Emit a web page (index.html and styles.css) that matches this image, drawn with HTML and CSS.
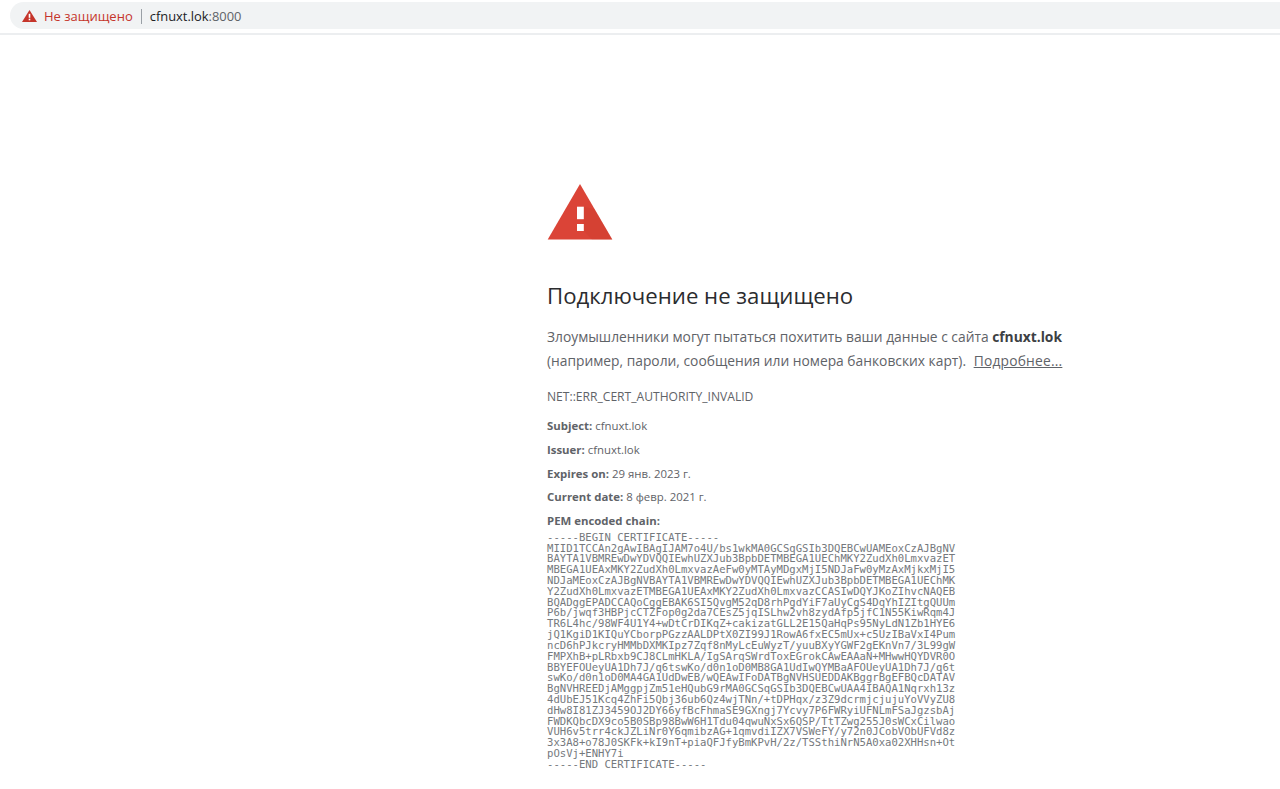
FILE: index.html
```html
<!DOCTYPE html>
<html lang="ru">
<head>
<meta charset="utf-8">
<title>Подключение не защищено</title>
<link rel="stylesheet" href="styles.css">
</head>
<body>
<header class="toolbar">
  <div class="omnibox">
    <svg class="chip-icon" viewBox="0 0 15 12" width="15" height="12" aria-hidden="true"><path fill="#c5352b" d="M7.5 0 15 12H0Z"/><rect x="6.7" y="3.8" width="1.6" height="4" fill="#fff"/><rect x="6.7" y="8.7" width="1.6" height="1.6" fill="#fff"/></svg>
    <span class="chip-text">Не защищено</span>
    <span class="divider"></span>
    <span class="url"><span class="host">cfnuxt.lok</span>:8000</span>
  </div>
</header>
<main class="interstitial">
  <svg class="warning" viewBox="0 0 66 58" width="66" height="58" aria-hidden="true">
    <path fill="#db4437" d="M33 0 65.3 55.5H0.7Z"/>
    <path fill="#c53929" opacity=".25" d="M36.8 23V47L45 55.5H65.3L47.5 25Z"/>
    <rect x="30" y="22.7" width="6.8" height="12.5" fill="#fff"/>
    <rect x="30" y="40" width="6.8" height="7" fill="#fff"/>
  </svg>
  <h1 class="title">Подключение не защищено</h1>
  <p class="lead">Злоумышленники могут пытаться похитить ваши данные с сайта <b class="site">cfnuxt.lok</b> (например, пароли, сообщения или номера банковских карт). <a class="more" href="#">Подробнее...</a></p>
  <div class="code">NET::ERR_CERT_AUTHORITY_INVALID</div>
  <ul class="details">
    <li><b>Subject:</b> cfnuxt.lok</li>
    <li><b>Issuer:</b> cfnuxt.lok</li>
    <li><b>Expires on:</b> 29 янв. 2023 г.</li>
    <li><b>Current date:</b> 8 февр. 2021 г.</li>
    <li><b>PEM encoded chain:</b></li>
  </ul>
  <pre class="pem">-----BEGIN CERTIFICATE-----
MIID1TCCAn2gAwIBAgIJAM7o4U/bs1wkMA0GCSqGSIb3DQEBCwUAMEoxCzAJBgNV
BAYTA1VBMREwDwYDVQQIEwhUZXJub3BpbDETMBEGA1UEChMKY2ZudXh0LmxvazET
MBEGA1UEAxMKY2ZudXh0LmxvazAeFw0yMTAyMDgxMjI5NDJaFw0yMzAxMjkxMjI5
NDJaMEoxCzAJBgNVBAYTA1VBMREwDwYDVQQIEwhUZXJub3BpbDETMBEGA1UEChMK
Y2ZudXh0LmxvazETMBEGA1UEAxMKY2ZudXh0LmxvazCCASIwDQYJKoZIhvcNAQEB
BQADggEPADCCAQoCggEBAK6SI5QvgM52qD8rhPgdYiF7aUyCgS4DqYhIZItgQUUm
P6b/jwqf3HBPjcCTZFop0g2da7CEsZ5jqISLhw2vh8zydAfp5jfC1N55KiwRqm4J
TR6L4hc/98WF4U1Y4+wDtCrDIKqZ+cakizatGLL2E15QaHqPs95NyLdN1Zb1HYE6
jQ1KgiD1KIQuYCborpPGzzAALDPtX0ZI99J1RowA6fxEC5mUx+c5UzIBaVxI4Pum
ncD6hPJkcryHMMbDXMKIpz7Zqf8nMyLcEuWyzT/yuuBXyYGWF2gEKnVn7/3L99gW
FMPXhB+pLRbxb9CJ8CLmHKLA/IgSArqSWrdToxEGrokCAwEAAaN+MHwwHQYDVR0O
BBYEFOUeyUA1Dh7J/q6tswKo/d0n1oD0MB8GA1UdIwQYMBaAFOUeyUA1Dh7J/q6t
swKo/d0n1oD0MA4GA1UdDwEB/wQEAwIFoDATBgNVHSUEDDAKBggrBgEFBQcDATAV
BgNVHREEDjAMggpjZm51eHQubG9rMA0GCSqGSIb3DQEBCwUAA4IBAQA1Nqrxh13z
4dUbEJ51Kcq4ZhFi5Qbj36ub6Qz4wjTNn/+tDPHqx/z3Z9dcrmjcjujuYoVVyZU8
dHw8I81ZJ3459OJ2DY66yfBcFhmaSE9GXngj7Ycvy7P6FWRyiUFNLmFSaJgzsbAj
FWDKQbcDX9co5B0SBp98BwW6H1Tdu04qwuNxSx6QSP/TtTZwg255J0sWCxCilwao
VUH6v5trr4ckJZLiNr0Y6qmibzAG+1qmvdiIZX7VSWeFY/y72n0JCobVObUFVd8z
3x3A8+o78J0SKFk+kI9nT+piaQFJfyBmKPvH/2z/TSSthiNrN5A0xa02XHHsn+Ot
pOsVj+ENHY7i
-----END CERTIFICATE-----</pre>
</main>
</body>
</html>
```

FILE: styles.css
```css
html, body {
  margin: 0;
  height: 100%;
  overflow: hidden;
  background: #fff;
}

body {
  font-family: "Open Sans", "Noto Sans", sans-serif;
  color: #5f6368;
}

.toolbar {
  height: 35px;
  padding: 2px 0 0 10px;
  box-sizing: border-box;
  border-bottom: 2px solid #eceef0;
}

.omnibox {
  height: 27px;
  display: flex;
  align-items: center;
  background: #f1f3f4;
  border-radius: 14px 0 0 14px;
  padding: 1px 0 0 12px;
  box-sizing: border-box;
  font-size: 13px;
}

.chip-icon {
  flex: none;
  margin-right: 7px;
}

.chip-text {
  color: #c5352b;
}

.divider {
  width: 1px;
  height: 15px;
  background: #9aa0a6;
  margin: 0 8px;
}

.url {
  color: #5f6368;
  font-size: 12.9px;
}

.host {
  color: #202124;
}

.interstitial {
  width: 525px;
  margin-left: 547px;
  padding-top: 149px;
}

.warning {
  display: block;
  margin-bottom: 39px;
}

.title {
  margin: 0 0 14px;
  font-size: 22.2px;
  line-height: 30px;
  font-weight: 400;
  color: #2b2c2f;
}

.lead {
  margin: 0 0 15px;
  font-size: 13.8px;
  line-height: 24px;
}

.site {
  font-weight: 700;
  color: #3c4043;
}

.more {
  color: #5f6368;
  margin-left: 4px;
  letter-spacing: 0.2px;
}

.code {
  font-size: 12.1px;
  line-height: 18px;
  margin-bottom: 8px;
  text-transform: uppercase;
}

.details {
  list-style: none;
  margin: 0;
  padding: 0;
  font-size: 11.4px;
  line-height: 23.75px;
}

.details b {
  font-weight: 700;
}

.pem {
  margin: -1px 0 0;
  font-family: "DejaVu Sans Mono", "Liberation Mono", monospace;
  font-size: 10.6px;
  line-height: 10.81px;
  color: #75797d;
}
```
